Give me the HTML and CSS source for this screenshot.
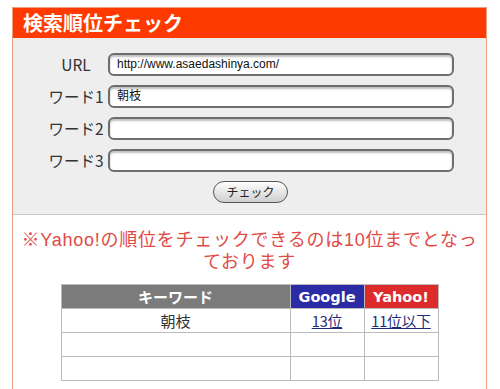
FILE: index.html
```html
<!DOCTYPE html>
<html lang="ja">
<head>
<meta charset="utf-8">
<title>検索順位チェック</title>
<link rel="stylesheet" href="styles.css">
</head>
<body>
<div class="box">
  <div class="head">検索順位チェック</div>
  <form class="form">
    <div class="row"><label class="lbl">URL</label><div class="inp">http://www.asaedashinya.com/</div></div>
    <div class="row"><label class="lbl">ワード1</label><div class="inp">朝枝</div></div>
    <div class="row"><label class="lbl">ワード2</label><div class="inp"></div></div>
    <div class="row"><label class="lbl">ワード3</label><div class="inp"></div></div>
    <div class="btnrow"><span class="btn">チェック</span></div>
  </form>
  <div class="result">
    <p class="note"><span class="ln">※Yahoo!の順位をチェックできるのは10位までとなっ</span><span class="ln">ております</span></p>
    <table class="tbl">
      <tr><th class="kw">キーワード</th><th class="gg">Google</th><th class="yh">Yahoo!</th></tr>
      <tr><td>朝枝</td><td><a href="#">13位</a></td><td><a href="#">11位以下</a></td></tr>
      <tr><td></td><td></td><td></td></tr>
      <tr><td></td><td></td><td></td></tr>
    </table>
  </div>
</div>
</body>
</html>
```
FILE: styles.css
```css
html, body { margin: 0; padding: 0; background: #fff; }
body { font-family: "Noto Sans CJK JP", "Noto Sans", sans-serif; color: #333; }
.box {
  margin: 7px 13px 0 12px;
  border: 1px solid #e9a181;
  border-bottom: none;
  height: 400px;
}
.head {
  background: #ff3a00;
  color: #fff;
  font-size: 20px;
  font-weight: bold;
  height: 30px;
  line-height: 30px;
  padding-left: 10px;
}
.form {
  margin: 0;
  background: #eeeeee;
  padding: 15px 0 11px 0;
  border-bottom: 1px solid #c8c8c8;
}
.row {
  display: flex;
  align-items: center;
  height: 22px;
  margin-bottom: 10px;
}
.lbl {
  width: 64px;
  margin-left: 31px;
  text-align: center;
  font-size: 15.5px;
  color: #333;
}
.inp {
  box-sizing: border-box;
  width: 346px;
  height: 23px;
  border: 2px solid #6e6e6e;
  border-radius: 6px;
  background: #fff;
  box-shadow: inset 0 2px 2px rgba(0,0,0,0.25);
  font-size: 12px;
  line-height: 19px;
  padding-left: 7px;
  color: #111;
  font-family: "Liberation Sans", "Noto Sans CJK JP", sans-serif;
}
.btnrow { display: flex; justify-content: center; padding-left: 2px; }
.btn {
  box-sizing: border-box;
  width: 75px;
  height: 22px;
  border: 1px solid #555;
  border-radius: 11px;
  background: linear-gradient(#ffffff, #e6e6e6 50%, #cfcfcf);
  font-size: 12px;
  line-height: 20px;
  text-align: center;
  color: #222;
}
.result { padding-top: 14px; }
.note {
  margin: 0 4px 11px 4px;
  text-align: center;
  color: #e04a45;
  font-family: "Liberation Sans", "Noto Sans CJK JP", sans-serif;
  font-size: 18px;
  letter-spacing: 0.75px;
  white-space: nowrap;
  display: flex;
  flex-direction: column;
  align-items: center;
}
.ln { display: block; height: 22px; line-height: 22px; }
.tbl {
  margin: 0 auto;
  border-collapse: collapse;
  width: 378px;
}
.tbl th, .tbl td {
  border: 1px solid #bbb;
  height: 23px;
  padding: 0;
  text-align: center;
}
.tbl th {
  color: #fff;
  font-family: "DejaVu Sans", "Noto Sans CJK JP", sans-serif;
  font-weight: bold;
  font-size: 14.5px;
}
.tbl th.kw { background: #7b7b7b; width: 228px; font-family: "Noto Sans CJK JP", sans-serif; font-size: 15px; }
.tbl th.gg { background: #2b2ba5; width: 73px; }
.tbl th.yh { background: #dd2b2b; }
.tbl td { font-size: 15px; color: #333; }
.tbl td a { color: #1e2a7a; text-decoration: underline; font-size: 14.5px; }
```
